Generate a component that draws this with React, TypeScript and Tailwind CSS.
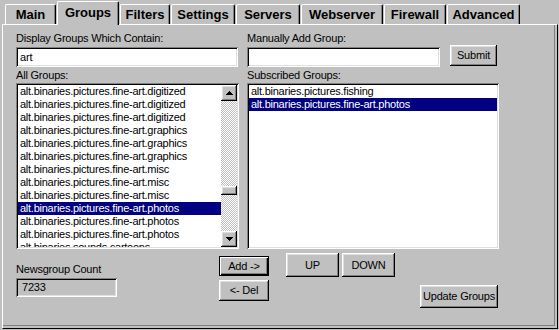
import React from "react";

const raised =
  "bg-[#c0c0c0] shadow-[inset_-1px_-1px_0_#000,inset_1px_1px_0_#fff,inset_-2px_-2px_0_#808080,inset_2px_2px_0_#dfdfdf]";
const sunken =
  "shadow-[inset_1px_1px_0_#808080,inset_-1px_-1px_0_#fff,inset_2px_2px_0_#000,inset_-2px_-2px_0_#dfdfdf]";

const tabs = [
  { name: "Main", w: "w-[51px]" },
  { name: "Groups", w: "w-[62px]", sel: true },
  { name: "Filters", w: "w-[50px]" },
  { name: "Settings", w: "w-[64px]" },
  { name: "Servers", w: "w-[64px]" },
  { name: "Webserver", w: "w-[82px]" },
  { name: "Firewall", w: "w-[62px]" },
  { name: "Advanced", w: "w-[73px]" },
];

const allGroups = [
  "alt.binaries.pictures.fine-art.digitized",
  "alt.binaries.pictures.fine-art.digitized",
  "alt.binaries.pictures.fine-art.digitized",
  "alt.binaries.pictures.fine-art.graphics",
  "alt.binaries.pictures.fine-art.graphics",
  "alt.binaries.pictures.fine-art.graphics",
  "alt.binaries.pictures.fine-art.misc",
  "alt.binaries.pictures.fine-art.misc",
  "alt.binaries.pictures.fine-art.misc",
  "alt.binaries.pictures.fine-art.photos",
  "alt.binaries.pictures.fine-art.photos",
  "alt.binaries.pictures.fine-art.photos",
  "alt.binaries.sounds.cartoons",
];

function Arrow({ up }: { up?: boolean }) {
  return (
    <svg width="7" height="4" viewBox="0 0 7 4" shapeRendering="crispEdges">
      {up ? (
        <>
          <rect x="3" y="0" width="1" height="1" fill="#000" />
          <rect x="2" y="1" width="3" height="1" fill="#000" />
          <rect x="1" y="2" width="5" height="1" fill="#000" />
          <rect x="0" y="3" width="7" height="1" fill="#000" />
        </>
      ) : (
        <>
          <rect x="0" y="0" width="7" height="1" fill="#000" />
          <rect x="1" y="1" width="5" height="1" fill="#000" />
          <rect x="2" y="2" width="3" height="1" fill="#000" />
          <rect x="3" y="3" width="1" height="1" fill="#000" />
        </>
      )}
    </svg>
  );
}

function Row({ text, sel }: { text: string; sel?: boolean }) {
  return (
    <div
      className={`h-[13px] leading-[13px] pl-[2px] whitespace-nowrap ${
        sel ? "bg-[#000080] text-white" : ""
      }`}
    >
      {text}
    </div>
  );
}

export default function App() {
  return (
    <div className="w-[559px] h-[330px] bg-[#c0c0c0] overflow-hidden font-['Liberation_Sans',Arial,sans-serif] text-[11px] leading-[13px] tracking-[-0.2px] text-black">
      {/* Tabs */}
      <div className="flex items-end h-[24px] pl-[5px] gap-[1px]">
        {tabs.map((t) =>
          t.sel ? (
            <div
              key={t.name}
              className={`${t.w} relative z-10 -mb-[1px] h-[24px] bg-[#c0c0c0] border-l border-t border-white border-r border-r-black rounded-t-[2px] shadow-[inset_-1px_0_0_#808080] flex items-start justify-center pt-[3px] font-bold text-[13px] leading-[16px] tracking-normal`}
            >
              {t.name}
            </div>
          ) : (
            <div
              key={t.name}
              className={`${t.w} h-[20px] bg-[#c0c0c0] border-l border-t border-white border-r border-r-black rounded-t-[2px] shadow-[inset_-1px_0_0_#808080] flex items-start justify-center pt-[2px] font-bold text-[13px] leading-[16px] tracking-normal`}
            >
              {t.name}
            </div>
          )
        )}
      </div>

      {/* Panel */}
      <div className="ml-[2px] w-[556px] h-[305px] border-l border-t border-white border-r border-b border-r-black border-b-black pr-[2px] pb-[2px]">
        <div className="h-full border-r border-b border-[#808080] pl-[13px] pt-[7px]">
          <div className="flex gap-[8px]">
            {/* Left column */}
            <div className="w-[223px] flex flex-col">
              <div className="h-[13px]">Display Groups Which Contain:</div>
              <div
                className={`mt-[2px] w-[222px] h-[20px] bg-white ${sunken} pl-[4px] flex items-center`}
              >
                art
              </div>
              <div className="mt-[2px] h-[13px]">All Groups:</div>
              <div
                className={`mt-[1px] h-[166px] bg-white ${sunken} p-[2px] flex`}
              >
                <div className="flex-1 overflow-hidden tracking-[-0.25px]">
                  {allGroups.map((g, i) => (
                    <Row key={i} text={g} sel={i === 9} />
                  ))}
                </div>
                <div className="w-[16px] flex flex-col">
                  <div className={`h-[16px] ${raised} flex items-center justify-center`}>
                    <Arrow up />
                  </div>
                  <div className="flex-1 flex flex-col bg-[repeating-conic-gradient(#c0c0c0_0%_25%,#ffffff_0%_50%)] bg-[length:2px_2px]">
                    <div className={`mt-[85px] h-[9px] ${raised}`} />
                  </div>
                  <div className={`h-[16px] ${raised} flex items-center justify-center`}>
                    <Arrow />
                  </div>
                </div>
              </div>
            </div>

            {/* Right column */}
            <div className="w-[252px] flex flex-col">
              <div className="h-[13px]">Manually Add Group:</div>
              <div className="mt-[2px] flex items-start">
                <div className={`w-[193px] h-[20px] bg-white ${sunken}`} />
                <button
                  className={`ml-[10px] -mt-[2px] w-[47px] h-[21px] ${raised} flex items-center justify-center`}
                >
                  Submit
                </button>
              </div>
              <div className="mt-[2px] h-[13px]">Subscribed Groups:</div>
              <div
                className={`mt-[1px] h-[166px] bg-white ${sunken} p-[2px] tracking-[-0.25px] overflow-hidden`}
              >
                <Row text="alt.binaries.pictures.fishing" />
                <Row text="alt.binaries.pictures.fine-art.photos" sel />
              </div>
            </div>
          </div>

          {/* Bottom row */}
          <div className="flex">
            <div className="w-[101px] mt-[14px] flex flex-col">
              <div className="h-[13px] whitespace-nowrap">Newsgroup Count</div>
              <div
                className={`mt-[2px] h-[19px] ${sunken} bg-[#c0c0c0] pl-[6px] flex items-center`}
              >
                7233
              </div>
            </div>
            <div className="ml-[102px] mt-[7px] flex flex-col gap-[4px]">
              <button className="w-[50px] h-[20px] border border-black bg-[#c0c0c0] shadow-[inset_1px_1px_0_#fff,inset_-1px_-1px_0_#000,inset_-2px_-2px_0_#808080] flex items-center justify-center">
                Add -&gt;
              </button>
              <button
                className={`w-[50px] h-[21px] ${raised} flex items-center justify-center`}
              >
                &lt;- Del
              </button>
            </div>
            <div className="ml-[17px] mt-[4px] w-[212px] flex flex-col">
              <div className="flex gap-[3px]">
                <button
                  className={`w-[53px] h-[24px] ${raised} flex items-center justify-center`}
                >
                  UP
                </button>
                <button
                  className={`w-[53px] h-[24px] ${raised} flex items-center justify-center`}
                >
                  DOWN
                </button>
              </div>
              <button
                className={`self-end mt-[8px] w-[78px] h-[23px] ${raised} flex items-center justify-center`}
              >
                Update Groups
              </button>
            </div>
          </div>
        </div>
      </div>
    </div>
  );
}
